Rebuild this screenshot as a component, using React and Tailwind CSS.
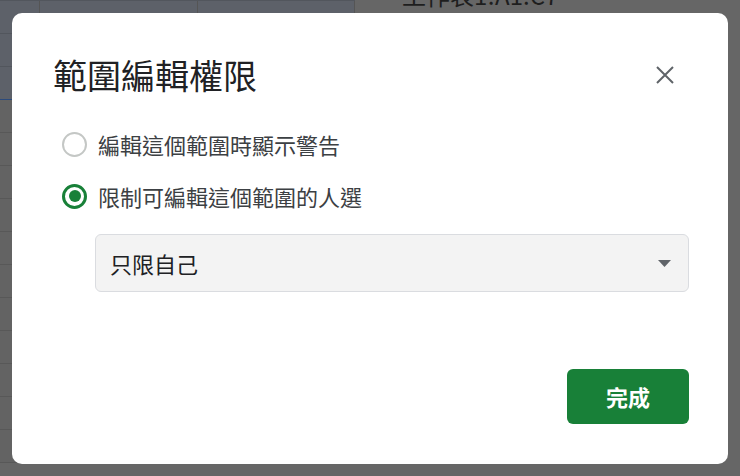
const rows = Array.from({ length: 15 });

function Sheet() {
  return (
    <div className="flex h-full w-full">
      <div className="relative w-[355px] shrink-0">
        <div className="flex flex-col -mt-[32px]">
          {rows.map((_, i) => (
            <div
              key={i}
              className={
                "grid grid-cols-[40px_158px_157px] h-[33px] border-b " +
                (i < 4 ? "bg-[#5d6169] border-[#52565d]" : "bg-[#636363] border-[#585858]") +
                (i === 3 ? " !border-[#2b4a7c]" : "")
              }
            >
              <div className="border-r border-[#555] flex items-end justify-end pr-[10px] text-[15px] text-[#1d1d1d]">
                {i === 1 ? "0" : ""}
              </div>
              <div className="border-r border-[#555] flex items-end justify-end pr-[8px] text-[15px] text-[#1d1d1d]">
                {i === 1 ? "0" : ""}
              </div>
              <div className="border-r border-[#555] flex items-end justify-end pr-[8px] text-[15px] text-[#1d1d1d]">
                {i === 1 ? "0" : ""}
              </div>
            </div>
          ))}
        </div>
      </div>
      <div className="flex-1 bg-[#666666] pl-[47px]">
        <p className="-mt-[20px] text-[24px] text-[#1e1e1e] leading-[30px]">工作表1!A1:C7</p>
      </div>
    </div>
  );
}

function Radio({ checked, label }) {
  return (
    <label className="flex items-center h-[36px] gap-[11px] pl-[10px]">
      {checked ? (
        <span className="w-[25px] h-[25px] rounded-full border-[3px] border-[#188038] flex items-center justify-center">
          <span className="w-[12px] h-[12px] rounded-full bg-[#188038]" />
        </span>
      ) : (
        <span className="w-[25px] h-[25px] rounded-full border-[2px] border-[#c4c7c5]" />
      )}
      <span className="text-[22px] text-[#3c4043]">{label}</span>
    </label>
  );
}

export default function App() {
  return (
    <div
      className="relative w-[740px] h-[476px] overflow-hidden bg-[#666666]"
      style={{ fontFamily: '"Noto Sans CJK TC", "Noto Sans", sans-serif' }}
    >
      <Sheet />

      <div className="absolute left-[12px] top-[13px] w-[716px] h-[451px] rounded-[10px] bg-white pl-[40px] pr-[39px] pt-[42px] flex flex-col">
        <div className="flex items-center justify-between h-[40px]">
          <h1 className="pl-px text-[34px] leading-[40px] text-[#202124]">範圍編輯權限</h1>
          <button className="mr-[12px] w-[24px] h-[24px] flex items-center justify-center">
            <svg width="18" height="18" viewBox="0 0 18 18">
              <path d="M1 1L17 17M17 1L1 17" stroke="#5f6368" strokeWidth="2" />
            </svg>
          </button>
        </div>

        <div className="mt-[31px] flex flex-col gap-[16px]">
          <Radio label="編輯這個範圍時顯示警告" />
          <Radio checked label="限制可編輯這個範圍的人選" />
        </div>

        <div className="mt-[20px] ml-[43px] h-[58px] rounded-[6px] border border-[#dadce0] bg-[#f3f3f3] flex items-center justify-between pl-[14px] pr-[17px]">
          <span className="text-[22px] text-[#202124]">只限自己</span>
          <svg width="13" height="7" viewBox="0 0 13 7">
            <path d="M0 0h13L6.5 7z" fill="#5f6368" />
          </svg>
        </div>

        <div className="mt-[77px] flex justify-end">
          <button className="w-[122px] h-[55px] rounded-[6px] bg-[#188038] text-white text-[22px] font-bold">
            完成
          </button>
        </div>
      </div>
    </div>
  );
}
